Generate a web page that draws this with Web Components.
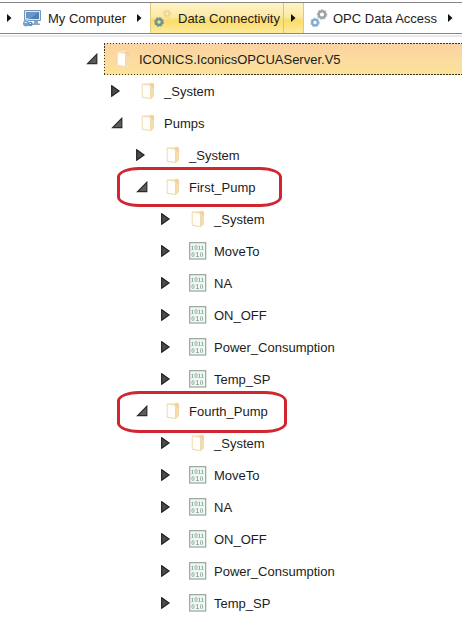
<!DOCTYPE html>
<html lang="en">
<head>
<meta charset="utf-8">
<title>Data Browser</title>
<style>
    body {
        margin: 0;
        width: 462px;
        height: 620px;
        overflow: hidden;
        background: #fff;
        color: #1c1c1c;
        font: 13px/16px "Liberation Sans", Arial, sans-serif;
    }
</style>
</head>
<body>
<data-browser></data-browser>

<script>
const gear = (cx, cy, r, color, width) => `
    <circle cx="${cx}" cy="${cy}" r="${r}" fill="none" stroke="${color}" stroke-width="${width}"/>
    <circle cx="${cx}" cy="${cy}" r="${r + width / 2 + .2}" fill="none" stroke="${color}" stroke-width="1.1" stroke-dasharray="2 1.5" opacity=".75"/>`;

const icons = {
    computer: `<svg width="20" height="20" viewBox="0 0 20 20">
        <path d="M2.500 2.500h16v10h-16z" fill="#dce8f2" stroke="#7896b2"/>
        <path d="M4 4h13v7H4z" fill="#4a81b8"/>
        <path d="M4 4h13L8 11H4z" fill="#6598c8"/>
        <path d="M12 13h4v2.500h-4zM10 15.500h8V17h-8z" fill="#8ba5bd"/>
        <path d="M5 10v6M5 16.500h5" fill="none" stroke="#b4d1e9" stroke-width="2.500"/>
        <circle cx="4" cy="15.500" r="3" fill="#6ea2d2"/><circle cx="8.500" cy="16" r="2.300" fill="#5a91c6"/>
        <path d="M2.500 14.500h2.500M7.500 15.500H9" stroke="#dcebf7"/></svg>`,
    gearsActive: `<svg width="20" height="20" viewBox="0 0 20 20">${gear(6, 14, 3, '#6c949c', 2.6)}${gear(14, 5.500, 2.5, '#efd59a', 1.9)}</svg>`,
    gears: `<svg width="20" height="20" viewBox="0 0 20 20">${gear(6, 14.500, 2.8, '#86abd0', 2.3)}${gear(13, 6.500, 3.3, '#9ba3aa', 2.5)}</svg>`,
    folder: `<svg width="18" height="20" viewBox="0 0 18 20">
        <g transform="translate(.5)">
            <path d="M2.500 2.500 12 1.500l2.500 1.200v12L12 18l-9.500-1z" fill="#faeccb"/>
            <path d="M9 3.500 12 2l2.500 1v12l-3.200 2.800z" fill="#f5dcae"/>
            <path d="M10 3.500 12 2l2.500 1v5z" fill="#f4cf9c"/>
            <path d="M2.700 3 11 4.300v13.200l-8.300-1.300z" fill="#fffefa" stroke="#ebd4a2" stroke-width=".8"/>
        </g></svg>`,
    tag: `<svg width="18" height="20" viewBox="0 0 18 20">
        <rect x=".7" y="1.700" width="16" height="16.300" fill="#f3f8f5" stroke="#99a29e" stroke-width="1.200"/>
        <g fill="none" stroke="#8fb5a3" stroke-width="1">
            <path d="M2.500 5.500 3.500 5v3.500M2.500 8.500h2M9.500 5.500l1-.5v3.500M9.500 8.500h2M12.500 5.500l1-.5v3.500M12.500 8.500h2"/>
            <rect x="6" y="4.500" width="2" height="4" rx="1"/>
            <rect x="3" y="11.500" width="2" height="4" rx="1"/>
            <path d="M7 12l1.500-.5v4M7 15.500h3"/>
            <rect x="11.500" y="11.500" width="2" height="4" rx="1"/>
        </g></svg>`,
    next: `<svg width="5" height="8" viewBox="0 0 5 8"><path d="M0 0 4.500 4 0 8z" fill="#111"/></svg>`,
    open: `<svg width="12" height="12" viewBox="0 0 12 12"><path d="M10.800 1.300v9.400H1.600z" fill="#5c5c5c" stroke="#2c2c2c" stroke-width="1.200"/></svg>`,
    closed: `<svg width="12" height="12" viewBox="0 0 12 12"><path d="M.7 .8 8 6 .7 11.200z" fill="#4c4c4c" stroke="#202020" stroke-width="1.200"/></svg>`
};

class PathItem extends HTMLElement {
    connectedCallback() {
        this.attachShadow({ mode: 'open' });
        this.shadowRoot.innerHTML = `
            <style>
            :host {
                display: flex;
                box-sizing: border-box;
                align-items: center;
                height: 100%;
                flex: none;
                white-space: nowrap;
            }
            :host([active]) {
                border: 1px solid #dfc982;
                border-width: 0 1px;
                background: linear-gradient(#fff4c6, #fbe9a4 45%, #fbdc6a 58%, #fdeb9c);
            }
            svg { display: block; }
            .icon { width: var(--icon, 26px); flex: none; }
            .label { width: var(--label); flex: none; padding-top: 2px; }
            .next {
                display: flex;
                align-items: center;
                height: 100%;
                padding: 0 7px 0 8px;
            }
            :host([active]) .next { border-left: 1px solid #dfc36f; padding: 0 7px; }
            </style>
            <span class="icon">${icons[this.getAttribute('icon')]}</span>
            <span class="label"><slot></slot></span>
            <span class="next">${icons.next}</span>
        `;
    }
}
customElements.define('path-item', PathItem);

class PathBar extends HTMLElement {
    connectedCallback() {
        this.attachShadow({ mode: 'open' });
        this.shadowRoot.innerHTML = `
            <style>
            :host {
                display: flex;
                box-sizing: border-box;
                height: 32px;
                margin-top: 2px;
                border: 1px solid #858585;
                border-width: 1px 0;
                background: #fff;
                overflow: hidden;
            }
            .root { display: flex; align-items: center; width: 22px; padding-left: 7px; box-sizing: border-box; flex: none; }
            </style>
            <span class="root">${icons.next}</span>
            <slot></slot>
        `;
    }
}
customElements.define('path-bar', PathBar);

class TreeRow extends HTMLElement {
    connectedCallback() {
        const level = Number(this.getAttribute('level'));
        const toggle = this.hasAttribute('open') ? 'open' : 'closed';
        this.attachShadow({ mode: 'open' });
        this.shadowRoot.innerHTML = `
            <style>
            :host {
                display: flex;
                position: relative;
                height: 32px;
                padding-left: ${86 + level * 25}px;
                white-space: nowrap;
            }
            svg { display: block; }
            .toggle { display: flex; align-items: center; width: 18px; flex: none; }
            .item {
                display: flex;
                box-sizing: border-box;
                align-items: center;
                flex: 1;
                padding-left: 10px;
            }
            .icon { width: 25px; flex: none; }
            .label { padding-top: 2px; }
            :host([selected]) .item {
                --dots: #3a3320 0 1.5px, #f6e2a0 1.5px 3px;
                background:
                    repeating-linear-gradient(90deg, var(--dots)) top / 100% 1px no-repeat,
                    repeating-linear-gradient(90deg, var(--dots)) bottom / 100% 1px no-repeat,
                    repeating-linear-gradient(var(--dots)) left / 1px 100% no-repeat,
                    linear-gradient(#fcd2a2, #fbe39c);
            }
            .mark {
                display: none;
                position: absolute;
                left: 117px;
                top: -4px;
                box-sizing: border-box;
                width: var(--mark);
                height: var(--mark-height, 40px);
                border: 3px solid #cf2630;
                border-radius: 22px / 10px;
            }
            :host([marked]) .mark { display: block; }
            </style>
            <span class="toggle">${icons[toggle]}</span>
            <div class="item">
                <span class="icon">${icons[this.getAttribute('icon') || 'folder']}</span>
                <span class="label"><slot></slot></span>
            </div>
            <div class="mark"></div>
        `;
    }
}
customElements.define('tree-row', TreeRow);

class DataBrowser extends HTMLElement {
    connectedCallback() {
        const pumpItems = `
            <tree-row level="3">_System</tree-row>
            <tree-row level="3" icon="tag">MoveTo</tree-row>
            <tree-row level="3" icon="tag">NA</tree-row>
            <tree-row level="3" icon="tag">ON_OFF</tree-row>
            <tree-row level="3" icon="tag">Power_Consumption</tree-row>
            <tree-row level="3" icon="tag">Temp_SP</tree-row>`;

        this.attachShadow({ mode: 'open' });
        this.shadowRoot.innerHTML = `
            <style>
            :host { display: flow-root; }
            .divider { height: 2px; margin-top: 1px; background: #e9e9ee; }
            .tree { padding-top: 6px; }
            </style>
            <path-bar>
                <path-item icon="computer" style="--label: 81px; width: 128px">My Computer</path-item>
                <path-item icon="gearsActive" active style="--icon: 25px; --label: 105px; width: 154px; padding-left: 2px">Data Connectivity</path-item>
                <path-item icon="gears" style="--icon: 24px; --label: 107px; padding-left: 5px">OPC Data Access</path-item>
            </path-bar>
            <div class="divider"></div>
            <div class="tree">
                <tree-row level="0" open selected>ICONICS.IconicsOPCUAServer.V5</tree-row>
                <tree-row level="1">_System</tree-row>
                <tree-row level="1" open>Pumps</tree-row>
                <tree-row level="2">_System</tree-row>
                <tree-row level="2" open marked style="--mark: 165px">First_Pump</tree-row>
                ${pumpItems}
                <tree-row level="2" open marked style="--mark: 170px; --mark-height: 42px">Fourth_Pump</tree-row>
                ${pumpItems}
            </div>
        `;
    }
}
customElements.define('data-browser', DataBrowser);
</script>
</body>
</html>
